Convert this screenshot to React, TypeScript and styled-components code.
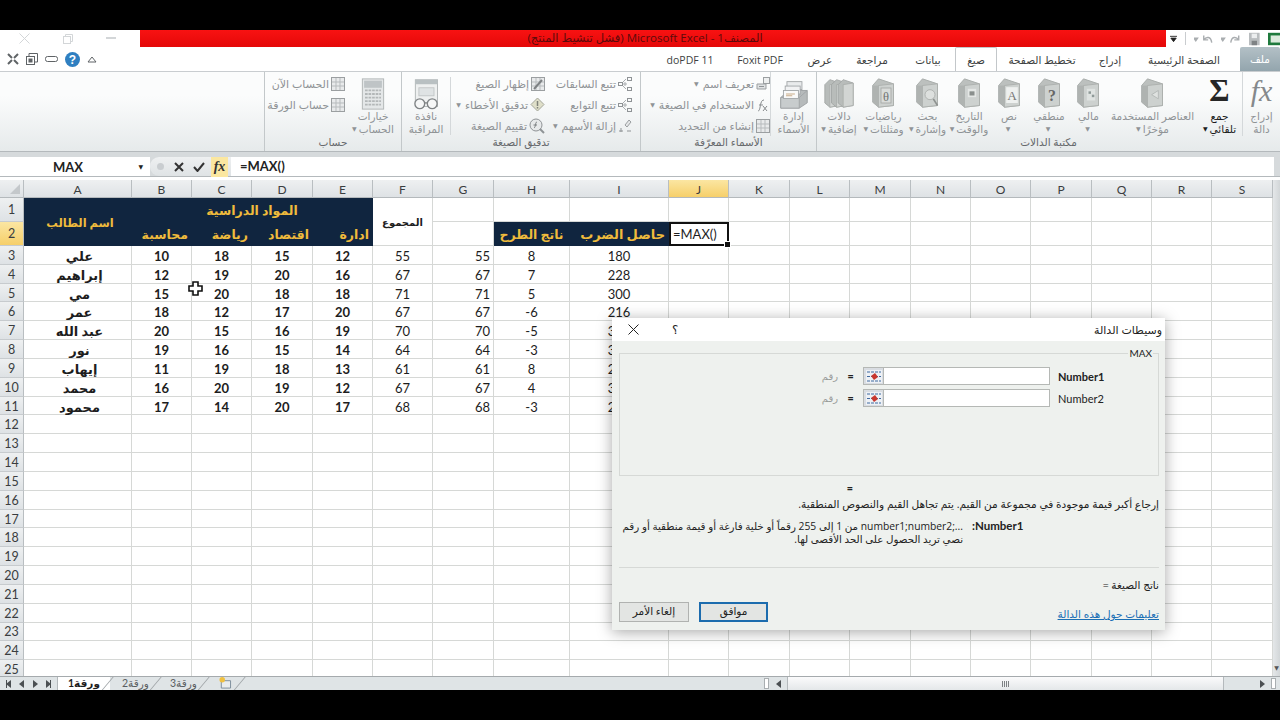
import React from 'react'
import styled, { createGlobalStyle } from 'styled-components'

const UI_FONT = '"Open Sans", "DejaVu Sans", sans-serif'
const CELL_FONT = 'Lato, "DejaVu Sans", sans-serif'
const GRID_LINE = '#d6d8d6'
const NAVY = '#10253f'
const GOLD = '#efbb3c'

const GlobalStyle = createGlobalStyle`
  html, body {
    margin: 0;
    background: #000;
    font-family: ${UI_FONT};
  }
  * {
    box-sizing: border-box;
  }
`

const Page = styled.div`
  position: relative;
  width: 1280px;
  height: 720px;
  padding: 30px 0;
  background: #000;
  overflow: hidden;
`

const Screen = styled.div`
  display: flex;
  flex-direction: column;
  height: 660px;
  background: #fff;
`

// # Title bar
const TitleBar = styled.div`
  display: flex;
  flex: none;
  height: 17px;
  background: #fff;
`

const WindowButtons = styled.div`
  display: flex;
  align-items: center;
  justify-content: space-around;
  width: 140px;
  padding: 0 8px 0 2px;
  color: #d3d6d8;
`

const RedTitle = styled.div`
  flex: 1;
  padding-right: 16px;
  background: linear-gradient(#f81212, #e40808);
  color: #5c0b0b;
  font-size: 11.5px;
  line-height: 16px;
  text-align: center;
  white-space: nowrap;
`

const QuickAccess = styled.div`
  display: flex;
  align-items: center;
  gap: 8px;
  width: 114px;
  padding-left: 4px;
  overflow: hidden;
  color: #a9adb0;
`

const QuickSep = styled.span`
  width: 1px;
  height: 13px;
  background: #c9cccf;
`

// # Tabs
const TabRow = styled.div`
  display: flex;
  flex: none;
  align-items: flex-end;
  height: 24px;
  background: #fff;
`

const Tab = styled.div<{ $w: number; $gap?: number; $active?: boolean; $file?: boolean }>`
  flex: none;
  width: ${({ $w }) => $w}px;
  height: ${({ $active, $file }) => ($active || $file ? 24 : 23)}px;
  margin-right: ${({ $gap }) => $gap ?? 0}px;
  border: ${({ $active }) => ($active ? '1px solid #c3c7ca' : 'none')};
  border-bottom: none;
  border-radius: 2px 2px 0 0;
  background: ${({ $file }) => ($file ? 'linear-gradient(#b3c0c6, #93a5ad)' : 'transparent')};
  color: ${({ $file }) => ($file ? '#fff' : '#3d3f41')};
  font-size: 10.5px;
  line-height: 25px;
  text-align: center;
  white-space: nowrap;
`

const HelpIcons = styled.div`
  display: flex;
  align-items: center;
  gap: 7px;
  height: 24px;
  margin-right: auto;
  padding-left: 7px;
  direction: ltr;
  color: #5f6366;
`

// # Ribbon
const Ribbon = styled.div`
  display: flex;
  flex: none;
  height: 81px;
  border-top: 1px solid #c9cdd0;
  border-bottom: 1px solid #b4b9bc;
  background: linear-gradient(#fbfcfc 30%, #e6eaeb);
`

const RibbonGroup = styled.div<{ $w: number }>`
  display: flex;
  flex: none;
  flex-direction: column;
  width: ${({ $w }) => $w}px;
  border-left: 1px solid #c3c8ca;
`

const GroupBody = styled.div`
  display: flex;
  flex: 1;
`

const GroupLabel = styled.div`
  height: 15px;
  color: #66696c;
  font-size: 10.5px;
  line-height: 13px;
  text-align: center;
  white-space: nowrap;
`

const BigButton = styled.div<{ $w: number; $on?: boolean; $sep?: boolean }>`
  display: flex;
  flex: none;
  flex-direction: column;
  align-items: center;
  width: ${({ $w }) => $w}px;
  padding-top: 6px;
  border-left: ${({ $sep }) => ($sep ? '1px solid #d4d8da' : 'none')};
  color: ${({ $on }) => ($on ? '#1c1c1c' : '#8f9396')};
`

const BigIcon = styled.div`
  display: flex;
  align-items: flex-start;
  justify-content: center;
  height: 32px;
`

const BigLabel = styled.div`
  font-size: 10.5px;
  line-height: 12.5px;
  text-align: center;
  white-space: nowrap;
`

const Caret = styled.span`
  margin-right: 2px;
  font-size: 6px;
  vertical-align: middle;
`

const SigmaGlyph = styled.span`
  color: #262626;
  font-family: "Liberation Serif", serif;
  font-size: 31px;
  font-weight: 700;
  line-height: 26px;
`

const FxGlyph = styled.span`
  color: #85898c;
  font-family: "Liberation Serif", serif;
  font-size: 30px;
  font-style: italic;
  line-height: 26px;
`

const CommandColumn = styled.div<{ $w: number; $pad?: number }>`
  display: flex;
  flex: none;
  flex-direction: column;
  width: ${({ $w }) => $w}px;
  padding-top: 1px;
  padding-right: ${({ $pad }) => $pad ?? 0}px;
`

const Command = styled.div`
  display: flex;
  align-items: center;
  gap: 2px;
  height: 21px;
  color: #8f9396;
  font-size: 11px;
  white-space: nowrap;
`

const GroupSep = styled.div`
  flex: none;
  width: 1px;
  height: 58px;
  margin: 5px 0 0;
  background: #d4d8da;
`

// # Formula bar
const FormulaBar = styled.div`
  display: flex;
  flex: none;
  align-items: stretch;
  height: 25px;
  padding: 5px 0 0;
  border-bottom: 1px solid #b4b9bc;
  background: #d6dadc;
`

const NameBox = styled.div`
  display: flex;
  align-items: center;
  flex: none;
  width: 150px;
  padding: 0 5px 0 53px;
  justify-content: space-between;
  background: #fff;
  color: #222;
  font-family: ${CELL_FONT};
  font-size: 13px;
  font-weight: 700;
`

const FormulaButtons = styled.div`
  display: flex;
  flex: none;
  align-items: center;
  gap: 9px;
  width: 81px;
  padding-left: 7px;
  border-radius: 9px 0 0 9px;
  background: linear-gradient(#eef0f1, #dfe3e5);
  color: #333;
`

const ButtonsDot = styled.span`
  flex: none;
  width: 7px;
  height: 7px;
  margin-right: 1px;
  border-radius: 50%;
  background: #c9cdd0;
`

const FxBox = styled.div`
  flex: none;
  width: 17px;
  height: 20px;
  margin-left: -3px;
  background: #fbe7a0;
  color: #333;
  font-family: "Liberation Serif", serif;
  font-size: 14px;
  font-style: italic;
  font-weight: 700;
  line-height: 19px;
  text-align: center;
`

const FormulaInput = styled.div`
  flex: 1;
  margin-right: 6px;
  padding-left: 9px;
  background: #fff;
  color: #222;
  font-family: ${CELL_FONT};
  font-size: 13px;
  font-weight: 700;
  line-height: 19px;
`

// # Sheet
const SheetArea = styled.div`
  display: flex;
  flex: 1;
  min-height: 0;
  margin-top: 3px;
  overflow: hidden;
  background: #d6dadc;
`

const SheetGrid = styled.div`
  display: grid;
  flex: none;
  grid-template-columns: 24px 108px 60px 60px 61px 60px 60px 61px 76px 99px 60px 61px 60px 61px 60px 60px 61px 60px 60px 61px;
  grid-template-rows: 18px 23.5px 24.5px repeat(23, 18.83px);
  width: 1273px;
  background: #fff;
`

const HeaderCell = styled.div<{ $on?: boolean }>`
  border-right: 1px solid #b9bec1;
  border-bottom: 1px solid #b4b9bc;
  background: ${({ $on }) => ($on ? 'linear-gradient(#fbe6a2, #f6cf6a)' : 'linear-gradient(#eef0f1, #dee2e5)')};
  color: #3a3d40;
  font-family: ${CELL_FONT};
  font-size: 12px;
  line-height: 20px;
  text-align: center;
`

const CornerCell = styled(HeaderCell)`
  position: relative;
  &::after {
    content: '';
    position: absolute;
    right: 3px;
    bottom: 3px;
    border-style: solid;
    border-width: 0 0 10px 10px;
    border-color: transparent transparent #c4c8cb transparent;
  }
`

const RowHead = styled(HeaderCell)`
  display: flex;
  align-items: center;
  justify-content: center;
  padding-top: 2px;
  border-bottom-color: #c7cbce;
  font-size: 12.5px;
`

const Cell = styled.div<{
  $align?: string
  $bold?: boolean
  $rows?: number
  $cols?: number
}>`
  display: flex;
  align-items: center;
  justify-content: ${({ $align }) => $align ?? 'center'};
  grid-row: span ${({ $rows }) => $rows ?? 1};
  grid-column: span ${({ $cols }) => $cols ?? 1};
  padding: 2px 3px 0;
  border-right: 1px solid ${GRID_LINE};
  border-bottom: 1px solid ${GRID_LINE};
  color: #1d1d1d;
  font-family: ${CELL_FONT};
  font-size: 13px;
  font-weight: ${({ $bold }) => ($bold ? 700 : 400)};
  white-space: nowrap;
`

const NameCell = styled(Cell)`
  padding-left: 7px;
  font-size: 13px;
  font-weight: 700;
`

const NavyCell = styled(Cell)<{ $size?: number; $inset?: number }>`
  padding-left: ${({ $inset }) => $inset ?? 3}px;
  border-color: ${NAVY};
  background: ${NAVY};
  color: ${GOLD};
  font-size: ${({ $size }) => $size ?? 12.5}px;
  font-weight: 700;
`

const SumCell = styled(Cell)`
  padding-bottom: 2px;
  font-size: 10px;
  font-weight: 700;
`

const ActiveCell = styled(Cell)`
  position: relative;
  justify-content: flex-start;
  padding: 0 2px;
  border: 2px solid #111;
  font-size: 13px;
  &::after {
    content: '';
    position: absolute;
    right: -4px;
    bottom: -4px;
    width: 5px;
    height: 5px;
    border: 1px solid #fff;
    background: #111;
  }
`

const VScroll = styled.div`
  display: flex;
  flex: 1;
  align-items: flex-end;
  justify-content: center;
  padding-bottom: 4px;
  background: linear-gradient(90deg, #e4e7e9, #d2d6d8);
  color: #555;
  font-size: 6px;
`

// # Sheet tabs and horizontal scroll
const BottomBar = styled.div`
  display: flex;
  flex: none;
  height: 14px;
  overflow: hidden;
  border-top: 1px solid #a5aaad;
  background: #dfe4e6;
`

const SheetNav = styled.div`
  display: flex;
  flex: none;
  align-items: center;
  justify-content: space-around;
  width: 58px;
  padding: 0 3px;
  border-right: 1px solid #b4b9bc;
  color: #4b4f52;
`

const SheetTab = styled.div<{ $w: number; $active?: boolean }>`
  position: relative;
  flex: none;
  width: ${({ $w }) => $w}px;
  padding-left: ${({ $active }) => ($active ? 10 : 12)}px;
  background: ${({ $active }) => ($active ? '#fff' : 'transparent')};
  color: ${({ $active }) => ($active ? '#1e1e1e' : '#5a5e61')};
  font-family: ${CELL_FONT};
  font-size: 10.5px;
  font-weight: ${({ $active }) => ($active ? 700 : 400)};
  line-height: 12px;
  white-space: nowrap;
  &::after {
    content: '';
    position: absolute;
    top: -1px;
    right: 3px;
    width: 1px;
    height: 18px;
    background: #9da2a5;
    transform: skewX(-40deg);
  }
`

const ScrollSpace = styled.div`
  flex: 1;
`

const SplitGrip = styled.div`
  flex: none;
  width: 5px;
  margin: 1px 2px;
  border: 1px solid #a9aeb1;
  background: #fff;
`

const ScrollArrow = styled.div`
  display: flex;
  flex: none;
  align-items: center;
  justify-content: center;
  width: 15px;
  color: #4b4f52;
`

const ScrollThumb = styled.div`
  display: flex;
  flex: none;
  align-items: center;
  justify-content: center;
  width: 437px;
  margin-left: 1px;
  border-right: 1px solid #b4b9bc;
  border-left: 1px solid #b4b9bc;
  background: linear-gradient(#fbfbfc, #e4e7e9);
`

const ThumbGrip = styled.div`
  width: 7px;
  height: 6px;
  background: repeating-linear-gradient(90deg, #7d8184 0 1px, transparent 1px 2px);
`

const ScrollRest = styled.div<{ $w: number }>`
  flex: none;
  width: ${({ $w }) => $w}px;
`

// # Dialog
const Dialog = styled.div`
  position: absolute;
  top: 318px;
  left: 612px;
  display: flex;
  flex-direction: column;
  width: 553px;
  height: 312px;
  background: #eef1ee;
  box-shadow: 0 2px 14px rgba(0, 0, 0, 0.35);
  color: #222;
`

const DialogHead = styled.div`
  display: flex;
  flex: none;
  align-items: center;
  justify-content: space-between;
  height: 23px;
  padding: 0 3px 0 16px;
  background: #fff;
  font-size: 11px;
`

const DialogControls = styled.div`
  display: flex;
  align-items: center;
  gap: 33px;
  font-size: 12px;
`

const DialogBody = styled.div`
  display: flex;
  flex: 1;
  flex-direction: column;
  padding: 0 6px 0 7px;
  font-size: 10.5px;
`

const FieldBox = styled.fieldset`
  height: 129px;
  margin: 6px 0 0;
  padding: 0;
  border: 1px solid #d6d9d6;
`

const FieldLegend = styled.legend`
  margin-left: auto;
  margin-right: 5px;
  padding: 0 1px;
  font-family: ${CELL_FONT};
  font-size: 10px;
  line-height: 12px;
`

const ArgRow = styled.div`
  display: grid;
  grid-template-columns: 218px 25px 187px auto;
  align-items: center;
  height: 18px;
  margin-bottom: 4px;
  &:first-of-type {
    margin-top: 8px;
  }
`

const ArgHint = styled.span`
  color: #9a9d9b;
  font-size: 10px;
  text-align: right;
`

const ArgEq = styled.span`
  font-size: 10px;
  font-weight: 700;
  text-align: center;
`

const ArgInput = styled.div`
  display: flex;
  height: 18px;
  border: 1px solid #b5b8b5;
  background: #fff;
`

const RefButton = styled.div`
  display: flex;
  flex: none;
  align-items: center;
  justify-content: center;
  width: 20px;
  border-right: 1px solid #b5b8b5;
  background: #d9dde2;
`

const ArgName = styled.span<{ $bold?: boolean }>`
  margin-left: 8px;
  font-family: ${CELL_FONT};
  font-size: 11px;
  font-weight: ${({ $bold }) => ($bold ? 700 : 400)};
`

const ResultEq = styled.div`
  height: 12px;
  margin-top: 6px;
  padding-left: 228px;
  font-size: 10px;
  font-weight: 700;
  line-height: 12px;
`

const Description = styled.div`
  height: 14px;
  margin-top: 3px;
  font-size: 10.6px;
  line-height: 14px;
  text-align: right;
  white-space: nowrap;
`

const ArgDetails = styled.div`
  display: flex;
  height: 25px;
  margin-top: 9px;
  padding-left: 2px;
  direction: ltr;
`

const ArgText = styled.div`
  width: 342px;
  font-size: 10.3px;
  line-height: 12.5px;
  text-align: right;
  white-space: nowrap;
`

const ArgTitle = styled.div`
  margin-left: 9px;
  font-family: ${CELL_FONT};
  font-size: 11.5px;
  font-weight: 700;
  line-height: 12.5px;
`

const Divider = styled.div`
  height: 1px;
  margin-top: 22px;
  background: #d6d9d6;
`

const ResultLine = styled.div`
  height: 14px;
  margin-top: 10px;
  font-size: 10.5px;
  line-height: 14px;
  text-align: right;
`

const DialogFooter = styled.div`
  display: flex;
  align-items: flex-end;
  justify-content: space-between;
  height: 20px;
  margin-top: 10px;
  direction: ltr;
`

const FooterButtons = styled.div`
  display: flex;
  gap: 10px;
`

const DialogButton = styled.div<{ $primary?: boolean }>`
  width: ${({ $primary }) => ($primary ? 69 : 70)}px;
  height: 20px;
  border: ${({ $primary }) => ($primary ? '2px solid #1c6cae' : '1px solid #b0b2b0')};
  background: #e3e5e3;
  font-size: 10.5px;
  line-height: ${({ $primary }) => ($primary ? 15 : 17)}px;
  text-align: center;
`

const HelpLink = styled.a`
  color: #1a6fb5;
  font-size: 10.5px;
  line-height: 16px;
  text-decoration: underline;
`

const CellCursor = styled.svg`
  position: absolute;
  top: 281px;
  left: 188px;
`

// # Drawings
const BookIcon: React.FC<{ children?: React.ReactNode }> = ({ children }) => (
  <svg width={25} height={30} viewBox='0 0 30 36'>
    <path d='M2 9 L9 1 L27 7 L27 33 L9 35 L2 29 Z' fill='#bcc0be' stroke='#a4a8a6' />
    <path d='M9 9 L27 7 L27 33 L9 35 Z' fill='#cdd1cf' stroke='#a9adab' />
    <path d='M9 9 L9 35 L2 29 L2 9 Z' fill='#afb3b1' />
    {children}
  </svg>
)

const books = {
  finance: (
    <g fill='#8f9a98'>
      <rect x='13' y='13' width='10' height='14' fill='#dfe3e1' />
      <rect x='15' y='16' width='3' height='3' />
      <rect x='19' y='20' width='3' height='3' />
    </g>
  ),
  logic: (
    <text x='18' y='28' fontSize='19' fontWeight='700' textAnchor='middle' fill='#666' fontFamily='Liberation Serif'>?</text>
  ),
  text: (
    <g>
      <rect x='11' y='11' width='14' height='19' fill='#eef0ef' />
      <text x='18' y='26' fontSize='16' textAnchor='middle' fill='#777' fontFamily='Liberation Serif'>A</text>
    </g>
  ),
  date: (
    <g fill='#8a8f8d'>
      <rect x='13' y='13' width='10' height='10' fill='#e4e7e5' />
      <rect x='15' y='16' width='6' height='5' />
    </g>
  ),
  lookup: (
    <g>
      <circle cx='18' cy='20' r='6' fill='#dde0de' stroke='#a8acaa' />
      <path d='M22 25 L27 33' stroke='#8e9290' strokeWidth='2' />
    </g>
  ),
  math: (
    <g>
      <rect x='12' y='12' width='12' height='18' fill='#d9dcda' stroke='#a3a7a5' />
      <text x='18' y='27' fontSize='15' textAnchor='middle' fill='#6e7270' fontFamily='Liberation Serif'>θ</text>
    </g>
  ),
  recent: <path d='M14 20 L22 15 L22 25 Z' fill='#dfe2e0' stroke='#b0b4b2' />,
}

const TripleBook: React.FC = () => (
  <svg width={30} height={30} viewBox='0 0 36 36'>
    {[0, 8, 16].map((x) => (
      <g key={x} transform={`translate(${x} 0)`}>
        <path d='M1 8 L7 2 L19 6 L19 33 L7 35 L1 30 Z' fill='#b8bcba' stroke='#a0a4a2' />
        <path d='M7 8 L19 6 L19 33 L7 35 Z' fill='#d2d5d3' stroke='#a9adab' />
      </g>
    ))}
  </svg>
)

const NameManagerIcon: React.FC = () => (
  <svg width={30} height={32} viewBox='0 0 34 36'>
    <path d='M2 22 L11 14 L32 14 L32 28 L23 34 L2 34 Z' fill='#b6babb' stroke='#989c9e' />
    <path d='M2 22 L23 22 L23 34 L2 34 Z' fill='#c8cccd' stroke='#a0a4a6' />
    <path d='M23 22 L32 14' stroke='#a0a4a6' />
    <rect x='9' y='4' width='17' height='9' fill='#e9ebec' stroke='#a0a4a6' />
    <rect x='7' y='9' width='17' height='9' fill='#f1f2f3' stroke='#a0a4a6' />
    <rect x='5' y='14' width='17' height='9' fill='#fafafa' stroke='#a0a4a6' />
    <path d='M8 18 H18 M8 20 H15' stroke='#c3a27a' />
  </svg>
)

const WatchIcon: React.FC = () => (
  <svg width={28} height={32} viewBox='0 0 30 36'>
    <rect x='3' y='2' width='25' height='30' fill='#eef0f0' stroke='#aeb2b3' />
    <rect x='3' y='2' width='25' height='5' fill='#b9c0c2' />
    <rect x='7' y='11' width='17' height='9' fill='#dfe3e4' stroke='#c0c4c5' />
    <circle cx='8' cy='29' r='5.5' fill='#f6f7f7' stroke='#7f8385' strokeWidth='1.5' />
    <circle cx='22' cy='29' r='5.5' fill='#f6f7f7' stroke='#7f8385' strokeWidth='1.5' />
    <path d='M13 28 H17' stroke='#7f8385' strokeWidth='1.5' />
  </svg>
)

const CalculatorIcon: React.FC = () => (
  <svg width={24} height={32} viewBox='0 0 26 36'>
    <rect x='1' y='1' width='24' height='34' fill='#e4e7e8' stroke='#aeb2b3' />
    <rect x='3' y='3' width='20' height='8' fill='#bfc4c6' />
    <path d='M4 14 H22 M4 18 H22 M4 22 H22 M4 26 H22 M4 30 H22' stroke='#b3b7b8' strokeWidth='2' strokeDasharray='3 1' />
  </svg>
)

const TraceIcon: React.FC = () => (
  <svg width={14} height={14} viewBox='0 0 14 14' fill='none' stroke='#8f9396'>
    <rect x='9.5' y='.5' width='4' height='3' />
    <rect x='9.5' y='10.5' width='4' height='3' />
    <rect x='.5' y='5.5' width='4' height='3' />
    <path d='M5 7 H9 M7 5 V9 M5 5 L8 2 M5 9 L8 12' stroke='#a9adb0' />
  </svg>
)

const SheetIcon: React.FC<{ fx?: boolean }> = ({ fx }) => (
  <svg width={14} height={14} viewBox='0 0 14 14'>
    <rect x='.5' y='.5' width='13' height='13' fill='#e8eaeb' stroke='#9b9fa1' />
    <path d='M1 5 H13 M1 9 H13 M5 1 V13 M9 1 V13' stroke='#b7bbbd' />
    {fx && <path d='M3 12 L11 3' stroke='#7d8183' strokeWidth='2' />}
  </svg>
)

const DiamondIcon: React.FC = () => (
  <svg width={15} height={15} viewBox='0 0 15 15'>
    <path d='M7.5 1 L14 7.5 L7.5 14 L1 7.5 Z' fill='#dfdfc9' stroke='#a5a79a' />
    <path d='M7.5 4 V9 M7.5 10 V11.5' stroke='#80827a' strokeWidth='1.5' />
  </svg>
)

const EvalIcon: React.FC = () => (
  <svg width={16} height={16} viewBox='0 0 16 16'>
    <circle cx='7' cy='7' r='6' fill='#e7e9ea' stroke='#8f9396' />
    <path d='M11 11 L15 15' stroke='#8f9396' strokeWidth='2' />
    <path d='M5 10 C7 9 6 4 8 4 M4.5 7 H8' stroke='#777b7d' fill='none' />
  </svg>
)

const EraserIcon: React.FC = () => (
  <svg width={14} height={14} viewBox='0 0 14 14'>
    <path d='M7 6 L11 1 L13 3 L9 8 Z' fill='#e4e6e7' stroke='#9b9fa1' />
    <path d='M1 12 H5 M9 12 H13 M3 9 V13' stroke='#8f9396' fill='none' />
  </svg>
)

const FxSmallIcon: React.FC = () => (
  <svg width={14} height={14} viewBox='0 0 14 14' fill='none' stroke='#85898b'>
    <path d='M2 13 C4 13 4 8 5 5 C5.5 3 6.5 2 8 2 M3 7 H7 M7 8 L11 13 M11 8 L7 13' />
  </svg>
)

const TagIcon: React.FC = () => (
  <svg width={14} height={14} viewBox='0 0 14 14'>
    <rect x='7.5' y='.5' width='6' height='6' fill='#eef0f0' stroke='#9b9fa1' />
    <path d='M1 7 H10 V12 H1 Z' fill='#dfe2e3' stroke='#9b9fa1' />
    <path d='M3 9.5 H8' stroke='#8f9396' />
  </svg>
)

const RefIcon: React.FC = () => (
  <svg width={16} height={13} viewBox='0 0 16 13'>
    <rect width='16' height='13' fill='#eef1f5' />
    <path d='M1 2 H15 M1 6.5 H15 M1 11 H15' stroke='#3f6aa0' strokeDasharray='3 1' />
    <path d='M5 6 L9 3 L12 7 L8 10 Z' fill='#c8362e' />
  </svg>
)

const CloseX: React.FC = () => (
  <svg width={11} height={11} viewBox='0 0 11 11' stroke='currentColor' strokeWidth='1'>
    <path d='M.5 .5 L10.5 10.5 M10.5 .5 L.5 10.5' />
  </svg>
)

const Triangle: React.FC<{ left?: boolean; bar?: boolean }> = ({ left, bar }) => (
  <svg width={6} height={8} viewBox='0 0 6 8' fill='currentColor'>
    {left ? <path d='M5 0 V8 L0 4 Z' /> : <path d='M1 0 V8 L6 4 Z' />}
    {bar && <rect x={left ? 0 : 5} y='0' width='1' height='8' />}
  </svg>
)

// # Data
const COLUMNS = 'ABCDEFGHIJKLMNOPQRS'.split('')

const students = [
  ['علي', 10, 18, 15, 12, 55, 8, 180],
  ['إبراهيم', 12, 19, 20, 16, 67, 7, 228],
  ['مي', 15, 20, 18, 18, 71, 5, 300],
  ['عمر', 18, 12, 17, 20, 67, -6, 216],
  ['عبد الله', 20, 15, 16, 19, 70, -5, 300],
  ['نور', 19, 16, 15, 14, 64, -3, 304],
  ['إيهاب', 11, 19, 18, 13, 61, 8, 209],
  ['محمد', 16, 20, 19, 12, 67, 4, 320],
  ['محمود', 17, 14, 20, 17, 68, -3, 238],
]

const libraryButtons = [
  { w: 38, lines: ['إدراج', 'دالة'], icon: <FxGlyph>fx</FxGlyph>, sep: true },
  { w: 45, lines: ['جمع', 'تلقائي'], icon: <SigmaGlyph>Σ</SigmaGlyph>, on: true, caret: true },
  { w: 89, lines: ['العناصر المستخدمة', 'مؤخرًا'], icon: <BookIcon>{books.recent}</BookIcon>, caret: true },
  { w: 39, lines: ['مالي', ''], icon: <BookIcon>{books.finance}</BookIcon>, caret: true },
  { w: 40, lines: ['منطقي', ''], icon: <BookIcon>{books.logic}</BookIcon>, caret: true },
  { w: 40, lines: ['نص', ''], icon: <BookIcon>{books.text}</BookIcon>, caret: true },
  { w: 40, lines: ['التاريخ', 'والوقت'], icon: <BookIcon>{books.date}</BookIcon>, caret: true },
  { w: 43, lines: ['بحث', 'وإشارة'], icon: <BookIcon>{books.lookup}</BookIcon>, caret: true },
  { w: 45, lines: ['رياضيات', 'ومثلثات'], icon: <BookIcon>{books.math}</BookIcon>, caret: true },
  { w: 44, lines: ['دالات', 'إضافية'], icon: <TripleBook />, caret: true },
]

const RibbonButton: React.FC<{
  w: number
  lines: string[]
  icon: React.ReactNode
  on?: boolean
  sep?: boolean
  caret?: boolean
}> = ({ w, lines, icon, on, sep, caret }) => (
  <BigButton $w={w} $on={on} $sep={sep}>
    <BigIcon>{icon}</BigIcon>
    <BigLabel>
      {lines[0]}
      <br />
      {lines[1]}
      {caret && <Caret>▼</Caret>}
    </BigLabel>
  </BigButton>
)

const App: React.FC = () => {
  const rowCells = (row: number) => {
    if (row === 1) {
      return (
        <>
          <NavyCell $rows={2} $size={11.5} $inset={8}>اسم الطالب</NavyCell>
          <NavyCell $cols={4}>المواد الدراسية</NavyCell>
          <SumCell $rows={2}>المجموع</SumCell>
          {COLUMNS.slice(6).map((c) => <Cell key={c} />)}
        </>
      )
    }
    if (row === 2) {
      return (
        <>
          {['محاسبة', 'رياضة', 'اقتصاد', 'ادارة'].map((t) => (
            <NavyCell key={t} $align='flex-end'>{t}</NavyCell>
          ))}
          <Cell />
          <NavyCell>ناتج الطرح</NavyCell>
          <NavyCell $align='flex-end' $size={13}>حاصل الضرب</NavyCell>
          <ActiveCell>=MAX()</ActiveCell>
          {COLUMNS.slice(10).map((c) => <Cell key={c} />)}
        </>
      )
    }
    const student = students[row - 3]
    if (!student) return COLUMNS.map((c) => <Cell key={c} />)
    const [name, b, c, d, e, total, diff, product] = student
    return (
      <>
        <NameCell>{name}</NameCell>
        {[b, c, d, e].map((v, i) => <Cell key={i} $bold>{v}</Cell>)}
        <Cell>{total}</Cell>
        <Cell $align='flex-end'>{total}</Cell>
        <Cell>{diff}</Cell>
        <Cell>{product}</Cell>
        {COLUMNS.slice(9).map((col) => <Cell key={col} />)}
      </>
    )
  }

  return (
    <Page>
      <GlobalStyle />
      <Screen>
        <TitleBar>
          <WindowButtons>
            <CloseX />
            <svg width={10} height={10} viewBox='0 0 10 10' fill='none' stroke='currentColor'>
              <rect x='.5' y='2.5' width='7' height='7' />
              <path d='M2.5 2 V.5 H9.5 V7.5 H8' />
            </svg>
            <svg width={10} height={4} viewBox='0 0 10 4'>
              <rect width='10' height='2' fill='currentColor' />
            </svg>
          </WindowButtons>
          <RedTitle dir='rtl'>
            المصنف1 - Microsoft Excel (فشل تنشيط المنتج)
          </RedTitle>
          <QuickAccess>
            <svg width={8} height={8} viewBox='0 0 8 8'>
              <path d='M0 1 H8 M1 3 H7 L4 7 Z' stroke='#222' fill='#222' />
            </svg>
            <QuickSep />
            <svg width={22} height={12} viewBox='0 0 22 12' fill='none' stroke='currentColor' strokeWidth='1.6'>
              <path d='M0 5 H4 L2 8 Z' fill='currentColor' />
              <path d='M11 2 V7 H16 M11 7 C14 3 19 3 20 10' />
            </svg>
            <svg width={22} height={12} viewBox='0 0 22 12' fill='none' stroke='currentColor' strokeWidth='1.6'>
              <path d='M0 5 H4 L2 8 Z' fill='currentColor' />
              <path d='M20 2 V7 H15 M20 7 C17 3 12 3 11 10' />
            </svg>
            <svg width={12} height={14} viewBox='0 0 12 14'>
              <rect width='12' height='14' fill='#b9bdbf' />
              <rect x='3' y='1' width='6' height='5' fill='#eceeef' />
              <rect x='3' y='9' width='6' height='5' fill='#7f8385' />
            </svg>
            <svg width={14} height={14} viewBox='0 0 14 14'>
              <rect width='14' height='14' fill='#1f7a3d' />
              <rect x='3' y='3' width='11' height='8' fill='#dcebdd' />
            </svg>
          </QuickAccess>
        </TitleBar>

        <TabRow dir='rtl'>
          <Tab $w={40} $file>ملف</Tab>
          <Tab $w={112}>الصفحة الرئيسية</Tab>
          <Tab $w={36}>إدراج</Tab>
          <Tab $w={68} $gap={16}>تخطيط الصفحة</Tab>
          <Tab $w={42} $gap={11} $active>صيغ</Tab>
          <Tab $w={54}>بيانات</Tab>
          <Tab $w={58}>مراجعة</Tab>
          <Tab $w={46}>عرض</Tab>
          <Tab $w={74}>Foxit PDF</Tab>
          <Tab $w={66}>doPDF 11</Tab>
          <HelpIcons>
            <svg width={12} height={12} viewBox='0 0 12 12' fill='none' stroke='currentColor'>
              <path d='M1 1 L5 5 M11 1 L7 5 M1 11 L5 7 M11 11 L7 7' strokeWidth='2' />
            </svg>
            <svg width={12} height={12} viewBox='0 0 12 12' fill='none' stroke='currentColor'>
              <rect x='.5' y='3.5' width='8' height='8' />
              <path d='M3 3 V.5 H11.5 V9 H9' />
              <rect x='3' y='6' width='3' height='3' fill='currentColor' />
            </svg>
            <svg width={13} height={6} viewBox='0 0 13 6' fill='none' stroke='currentColor'>
              <rect x='.5' y='.5' width='12' height='5' rx='2' />
            </svg>
            <svg width={15} height={15} viewBox='0 0 15 15'>
              <circle cx='7.5' cy='7.5' r='7.5' fill='#2f7fc1' />
              <text x='7.5' y='12' fontSize='12' fontWeight='700' textAnchor='middle' fill='#fff' fontFamily='Liberation Sans'>?</text>
            </svg>
            <svg width={10} height={8} viewBox='0 0 10 8' fill='none' stroke='currentColor'>
              <path d='M1 7 L5 2 L9 7 Z' />
            </svg>
          </HelpIcons>
        </TabRow>

        <Ribbon dir='rtl'>
          <RibbonGroup $w={464}>
            <GroupBody>
              {libraryButtons.map((b) => <RibbonButton key={b.lines[0]} {...b} />)}
            </GroupBody>
            <GroupLabel>مكتبة الدالات</GroupLabel>
          </RibbonGroup>

          <RibbonGroup $w={176}>
            <GroupBody>
              <RibbonButton w={46} lines={['إدارة', 'الأسماء']} icon={<NameManagerIcon />} sep />
              <CommandColumn $w={128}>
                <Command><TagIcon />تعريف اسم<Caret>▼</Caret></Command>
                <Command><FxSmallIcon />الاستخدام في الصيغة<Caret>▼</Caret></Command>
                <Command><SheetIcon />إنشاء من التحديد</Command>
              </CommandColumn>
            </GroupBody>
            <GroupLabel>الأسماء المعرّفة</GroupLabel>
          </RibbonGroup>

          <RibbonGroup $w={239}>
            <GroupBody>
              <CommandColumn $w={95} $pad={8}>
                <Command><TraceIcon />تتبع السابقات</Command>
                <Command><TraceIcon />تتبع التوابع</Command>
                <Command><EraserIcon />إزالة الأسهم<Caret>▼</Caret></Command>
              </CommandColumn>
              <CommandColumn $w={94}>
                <Command><SheetIcon fx />إظهار الصيغ</Command>
                <Command><DiamondIcon />تدقيق الأخطاء<Caret>▼</Caret></Command>
                <Command><EvalIcon />تقييم الصيغة</Command>
              </CommandColumn>
              <GroupSep />
              <RibbonButton w={48} lines={['نافذة', 'المراقبة']} icon={<WatchIcon />} />
            </GroupBody>
            <GroupLabel>تدقيق الصيغة</GroupLabel>
          </RibbonGroup>

          <RibbonGroup $w={137}>
            <GroupBody>
              <RibbonButton w={56} lines={['خيارات', 'الحساب']} icon={<CalculatorIcon />} caret />
              <CommandColumn $w={78}>
                <Command><SheetIcon />الحساب الآن</Command>
                <Command><SheetIcon />حساب الورقة</Command>
              </CommandColumn>
            </GroupBody>
            <GroupLabel>حساب</GroupLabel>
          </RibbonGroup>
        </Ribbon>

        <FormulaBar>
          <NameBox>
            MAX
            <Caret>▼</Caret>
          </NameBox>
          <FormulaButtons>
            <ButtonsDot />
            <svg width={10} height={10} viewBox='0 0 10 10' stroke='#333' strokeWidth='2'>
              <path d='M1 1 L9 9 M9 1 L1 9' />
            </svg>
            <svg width={12} height={10} viewBox='0 0 12 10' fill='none' stroke='#333' strokeWidth='2'>
              <path d='M1 5 L4.5 9 L11 1' />
            </svg>
            <FxBox>fx</FxBox>
          </FormulaButtons>
          <FormulaInput>=MAX()</FormulaInput>
        </FormulaBar>

        <SheetArea>
          <SheetGrid>
            <CornerCell />
            {COLUMNS.map((c) => <HeaderCell key={c} $on={c === 'J'}>{c}</HeaderCell>)}
            {Array.from({ length: 25 }, (_, i) => i + 1).map((row) => (
              <React.Fragment key={row}>
                <RowHead $on={row === 2}>{row}</RowHead>
                {rowCells(row)}
              </React.Fragment>
            ))}
          </SheetGrid>
          <VScroll>▼</VScroll>
        </SheetArea>

        <BottomBar>
          <SheetNav>
            <Triangle left bar />
            <Triangle left />
            <Triangle />
            <Triangle bar />
          </SheetNav>
          <SheetTab $w={52} $active>ورقة1</SheetTab>
          <SheetTab $w={48}>ورقة2</SheetTab>
          <SheetTab $w={48}>ورقة3</SheetTab>
          <SheetTab $w={36}>
            <svg width={14} height={12} viewBox='0 0 14 13'>
              <path d='M3 4 H13 V12 H3 Z' fill='#e9ecee' stroke='#7a8a99' />
              <circle cx='4' cy='3' r='3' fill='#f0c040' />
            </svg>
          </SheetTab>
          <ScrollSpace />
          <SplitGrip />
          <ScrollArrow><Triangle left /></ScrollArrow>
          <ScrollThumb><ThumbGrip /></ScrollThumb>
          <ScrollRest $w={30} />
          <ScrollArrow><Triangle /></ScrollArrow>
          <SplitGrip />
          <ScrollRest $w={2} />
        </BottomBar>
      </Screen>

      <CellCursor width={15} height={15} viewBox='0 0 15 15'>
        <path d='M5 1 H10 V5 H14 V10 H10 V14 H5 V10 H1 V5 H5 Z' fill='#fff' stroke='#111' strokeWidth='1.6' />
      </CellCursor>

      <Dialog>
        <DialogHead>
          <DialogControls>
            <CloseX />
            <span>؟</span>
          </DialogControls>
          <span dir='rtl'>وسيطات الدالة</span>
        </DialogHead>
        <DialogBody>
          <FieldBox>
            <FieldLegend>MAX</FieldLegend>
            <ArgRow>
              <ArgHint>رقم</ArgHint>
              <ArgEq>=</ArgEq>
              <ArgInput><RefButton><RefIcon /></RefButton></ArgInput>
              <ArgName $bold>Number1</ArgName>
            </ArgRow>
            <ArgRow>
              <ArgHint>رقم</ArgHint>
              <ArgEq>=</ArgEq>
              <ArgInput><RefButton><RefIcon /></RefButton></ArgInput>
              <ArgName>Number2</ArgName>
            </ArgRow>
          </FieldBox>
          <ResultEq>=</ResultEq>
          <Description dir='rtl'>إرجاع أكبر قيمة موجودة في مجموعة من القيم. يتم تجاهل القيم والنصوص المنطقية.</Description>
          <ArgDetails>
            <ArgText dir='rtl'>
              <bdi dir='ltr'>number1;number2;...</bdi> من 1 إلى 255 رقماً أو خلية فارغة أو قيمة منطقية أو رقم
              <br />
              نصي تريد الحصول على الحد الأقصى لها.
            </ArgText>
            <ArgTitle>:Number1</ArgTitle>
          </ArgDetails>
          <Divider />
          <ResultLine dir='rtl'>ناتج الصيغة =</ResultLine>
          <DialogFooter>
            <FooterButtons>
              <DialogButton>إلغاء الأمر</DialogButton>
              <DialogButton $primary>موافق</DialogButton>
            </FooterButtons>
            <HelpLink dir='rtl'>تعليمات حول هذه الدالة</HelpLink>
          </DialogFooter>
        </DialogBody>
      </Dialog>
    </Page>
  )
}

export default App
